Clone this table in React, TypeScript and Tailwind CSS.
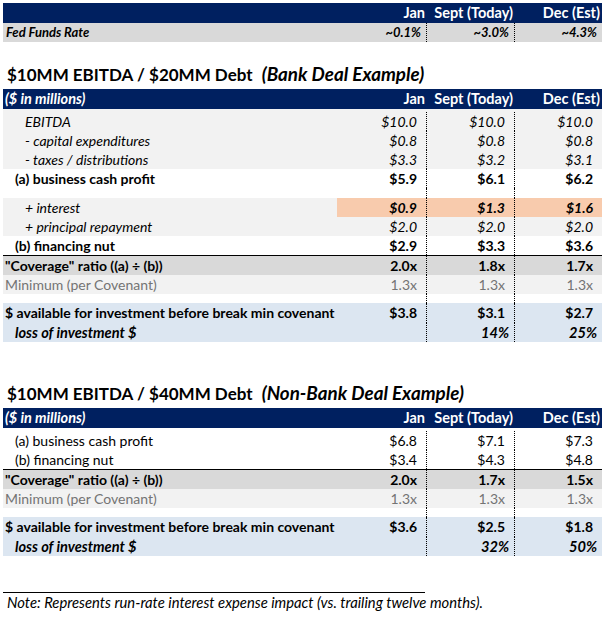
type Kind =
  | "italic"
  | "bold"
  | "plain"
  | "interest"
  | "cover"
  | "min"
  | "avail"
  | "loss"
  | "gap";

type Line = {
  label?: string;
  values?: string[];
  kind: Kind;
  height: string;
};

const bankRows: Line[] = [
  { label: "EBITDA", values: ["$10.0", "$10.0", "$10.0"], kind: "italic", height: "h-[22px] pt-[3px]" },
  { label: "- capital expenditures", values: ["$0.8", "$0.8", "$0.8"], kind: "italic", height: "h-[19px]" },
  { label: "- taxes / distributions", values: ["$3.3", "$3.2", "$3.1"], kind: "italic", height: "h-[19px]" },
  { label: "(a) business cash profit", values: ["$5.9", "$6.1", "$6.2"], kind: "bold", height: "h-[19px]" },
  { kind: "gap", height: "h-[10px]" },
  { label: "+ interest", values: ["$0.9", "$1.3", "$1.6"], kind: "interest", height: "h-[19px]" },
  { label: "+ principal repayment", values: ["$2.0", "$2.0", "$2.0"], kind: "italic", height: "h-[19px]" },
  { label: "(b) financing nut", values: ["$2.9", "$3.3", "$3.6"], kind: "bold", height: "h-[19px]" },
  { label: "\"Coverage\" ratio ((a) ÷ (b))", values: ["2.0x", "1.8x", "1.7x"], kind: "cover", height: "h-[20px]" },
  { label: "Minimum (per Covenant)", values: ["1.3x", "1.3x", "1.3x"], kind: "min", height: "h-[19px]" },
  { kind: "gap", height: "h-[9px]" },
  { label: "$ available for investment before break min covenant", values: ["$3.8", "$3.1", "$2.7"], kind: "avail", height: "h-[20px]" },
  { label: "loss of investment $", values: ["", "14%", "25%"], kind: "loss", height: "h-[19px]" },
];

const nonBankRows: Line[] = [
  { label: "(a) business cash profit", values: ["$6.8", "$7.1", "$7.3"], kind: "plain", height: "h-[22px] pt-[3px]" },
  { label: "(b) financing nut", values: ["$3.4", "$4.3", "$4.8"], kind: "plain", height: "h-[19px]" },
  { label: "\"Coverage\" ratio ((a) ÷ (b))", values: ["2.0x", "1.7x", "1.5x"], kind: "cover", height: "h-[20px]" },
  { label: "Minimum (per Covenant)", values: ["1.3x", "1.3x", "1.3x"], kind: "min", height: "h-[19px]" },
  { kind: "gap", height: "h-[9px]" },
  { label: "$ available for investment before break min covenant", values: ["$3.6", "$2.5", "$1.8"], kind: "avail", height: "h-[20px]" },
  { label: "loss of investment $", values: ["", "32%", "50%"], kind: "loss", height: "h-[19px]" },
];

const styles: Record<Kind, { row: string; label: string; value: string; cell?: string }> = {
  italic: { row: "bg-[#f2f2f2]", label: "pl-[22px] italic", value: "pr-[9px] italic" },
  bold: { row: "bg-white", label: "pl-[12px] font-bold", value: "pr-[9px] font-bold" },
  plain: { row: "bg-white", label: "pl-[12px]", value: "pr-[9px]" },
  interest: {
    row: "bg-[#f2f2f2]",
    label: "pl-[22px] italic",
    value: "pr-[9px] font-bold italic",
    cell: "bg-[#f8cbad]",
  },
  cover: { row: "bg-[#d9d9d9] border-t border-black", label: "pl-[2px] font-bold", value: "pr-[9px] font-bold" },
  min: { row: "bg-[#f2f2f2] text-[#747474]", label: "pl-[2px]", value: "pr-[9px]" },
  avail: { row: "bg-[#dce6f1]", label: "pl-[2px] font-bold", value: "pr-[9px] font-bold" },
  loss: {
    row: "bg-[#dce6f1]",
    label: "pl-[12px] text-[14.6px] font-bold italic",
    value: "pr-[5px] text-[14.6px] font-bold italic",
  },
  gap: { row: "bg-white", label: "", value: "" },
};

const colWidths = ["w-[90px]", "w-[88px]", "w-[87px]"];

function HeaderRow({ label }: { label?: string }) {
  return (
    <div className="flex h-[20px] bg-[#002060] text-[14.5px] font-bold leading-[20px] text-white">
      <div className="w-[334px] pl-[2px] italic">{label}</div>
      <div className="w-[90px] pr-[2px] text-right">Jan</div>
      <div className="w-[88px] whitespace-nowrap pr-[2px] text-right">Sept (Today)</div>
      <div className="w-[87px] pr-[2px] text-right">Dec (Est)</div>
    </div>
  );
}

function TableRow({ line }: { line: Line }) {
  const s = styles[line.kind];

  return (
    <div className={`box-border flex leading-[19px] ${line.height} ${s.row}`}>
      <div className={`w-[334px] whitespace-nowrap ${s.label}`}>{line.label}</div>
      {colWidths.map((w, i) => (
        <div
          key={w}
          className={`${w} text-right ${s.value} ${s.cell ?? ""} ${
            i < 2 ? "border-r border-dotted border-black" : ""
          }`}
        >
          {line.values?.[i]}
        </div>
      ))}
    </div>
  );
}

function Section({ title, tag, rows }: { title: string; tag: string; rows: Line[] }) {
  return (
    <section>
      <h2 className="mb-[3px] h-[24px] whitespace-nowrap pl-[4px] text-[17px] leading-[24px] font-bold">
        {title}
        <span className="ml-[9px] text-[18.8px] italic">{tag}</span>
      </h2>
      <HeaderRow label="($ in millions)" />
      {rows.map((line, i) => (
        <TableRow key={i} line={line} />
      ))}
    </section>
  );
}

export default function App() {
  return (
    <div className="min-h-[617px] w-[608px] bg-white pl-[3px] pt-[3px] font-[Lato,sans-serif] text-[14px] text-black">
      <div className="w-[599px]">
        <HeaderRow />
        <div className="flex h-[19px] bg-[#d9d9d9] text-[13px] font-bold italic leading-[19px]">
          <div className="w-[334px] pl-[3px]">Fed Funds Rate</div>
          <div className="w-[90px] border-r border-dotted border-black pr-[5px] text-right">~0.1%</div>
          <div className="w-[88px] border-r border-dotted border-black pr-[5px] text-right">~3.0%</div>
          <div className="w-[87px] pr-[5px] text-right">~4.3%</div>
        </div>

        <div className="mt-[20px]">
          <Section title="$10MM EBITDA / $20MM Debt" tag="(Bank Deal Example)" rows={bankRows} />
        </div>

        <div className="mt-[39px]">
          <Section title="$10MM EBITDA / $40MM Debt" tag="(Non-Bank Deal Example)" rows={nonBankRows} />
        </div>

        <div className="mt-[36px] w-[422px] border-t border-black" />
        <p className="h-[19px] whitespace-nowrap pl-[4px] text-[14.8px] italic leading-[19px]">
          Note: Represents run-rate interest expense impact (vs. trailing twelve months).
        </p>
      </div>
    </div>
  );
}
